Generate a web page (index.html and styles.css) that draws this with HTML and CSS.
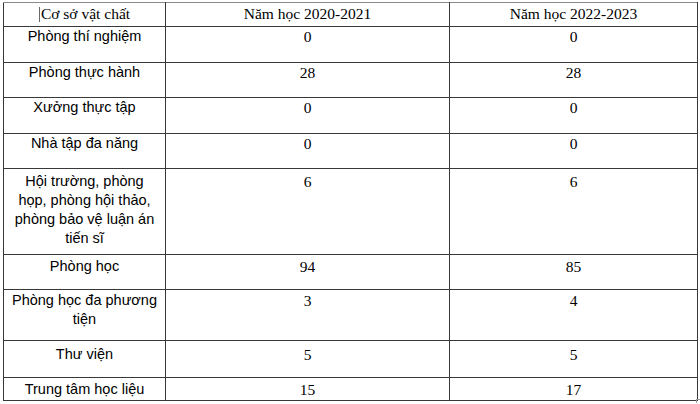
FILE: index.html
```html
<!DOCTYPE html>
<html lang="vi">
<head>
<meta charset="utf-8">
<title>Cơ sở vật chất</title>
<link rel="stylesheet" href="styles.css">
</head>
<body>
<div class="sheet">
  <table class="facilities">
    <colgroup>
      <col class="c-name">
      <col class="c-y1">
      <col class="c-y2">
    </colgroup>
    <thead>
      <tr class="r-head">
        <th class="serif"><span class="caret"></span>Cơ sở vật chất</th>
        <th class="serif">Năm học 2020-2021</th>
        <th class="serif">Năm học 2022-2023</th>
      </tr>
    </thead>
    <tbody>
      <tr class="r-1">
        <td class="name">Phòng thí nghiệm</td><td class="num">0</td><td class="num">0</td>
      </tr>
      <tr class="r-2">
        <td class="name">Phòng thực hành</td><td class="num">28</td><td class="num">28</td>
      </tr>
      <tr class="r-3">
        <td class="name">Xưởng thực tập</td><td class="num">0</td><td class="num">0</td>
      </tr>
      <tr class="r-4">
        <td class="name">Nhà tập đa năng</td><td class="num">0</td><td class="num">0</td>
      </tr>
      <tr class="r-5">
        <td class="name">Hội trường, phòng<br>họp, phòng hội thảo,<br>phòng bảo vệ luận án<br>tiến sĩ</td><td class="num">6</td><td class="num">6</td>
      </tr>
      <tr class="r-6">
        <td class="name">Phòng học</td><td class="num">94</td><td class="num">85</td>
      </tr>
      <tr class="r-7">
        <td class="name">Phòng học đa phương<br>tiện</td><td class="num">3</td><td class="num">4</td>
      </tr>
      <tr class="r-8">
        <td class="name">Thư viện</td><td class="num">5</td><td class="num">5</td>
      </tr>
      <tr class="r-9">
        <td class="name">Trung tâm học liệu</td><td class="num">15</td><td class="num">17</td>
      </tr>
    </tbody>
  </table>
  <span class="grip"></span>
</div>
</body>
</html>
```
FILE: styles.css
```css
html, body {
  margin: 0;
  padding: 0;
  background: #ffffff;
}

.sheet {
  position: relative;
  width: 700px;
  height: 404px;
  padding: 2px 0 0 3px;
  box-sizing: border-box;
}

.facilities {
  border-collapse: collapse;
  table-layout: fixed;
  width: 694px;
  color: #000000;
}

.c-name { width: 162px; }
.c-y1 { width: 284px; }
.c-y2 { width: 248px; }

.facilities th,
.facilities td {
  border: 1px solid #383838;
  padding: 0;
  vertical-align: top;
  text-align: center;
  line-height: 19px;
  font-weight: normal;
}

.facilities thead th {
  border-top-color: #8a8a8a;
}

.serif,
.num {
  font-family: "Liberation Serif", "Times New Roman", serif;
  font-size: 15.5px;
}

.name {
  font-family: "Liberation Sans", Arial, sans-serif;
  font-size: 14.5px;
}

.caret {
  display: inline-block;
  width: 1px;
  height: 15px;
  margin-right: 1px;
  background: #6a6a6a;
  vertical-align: -3px;
}

.r-head { height: 24px; }
.r-1 { height: 36px; }
.r-2 { height: 35px; }
.r-3 { height: 36px; }
.r-4 { height: 35px; }
.r-5 { height: 86px; }
.r-6 { height: 35px; }
.r-7 { height: 51px; }
.r-8 { height: 37px; }
.r-9 { height: 23px; }

.r-head th { padding-top: 1px; }
.r-5 td { padding-top: 3px; }
.r-6 td { padding-top: 2px; }
.r-7 td { padding-top: 1px; }
.r-8 td { padding-top: 4px; }
.r-9 td { padding-top: 2px; }

.grip {
  position: absolute;
  left: 696px;
  top: 399px;
  width: 3px;
  height: 3px;
  border-top: 1px solid #9a9a9a;
  border-left: 1px solid #9a9a9a;
}
```
